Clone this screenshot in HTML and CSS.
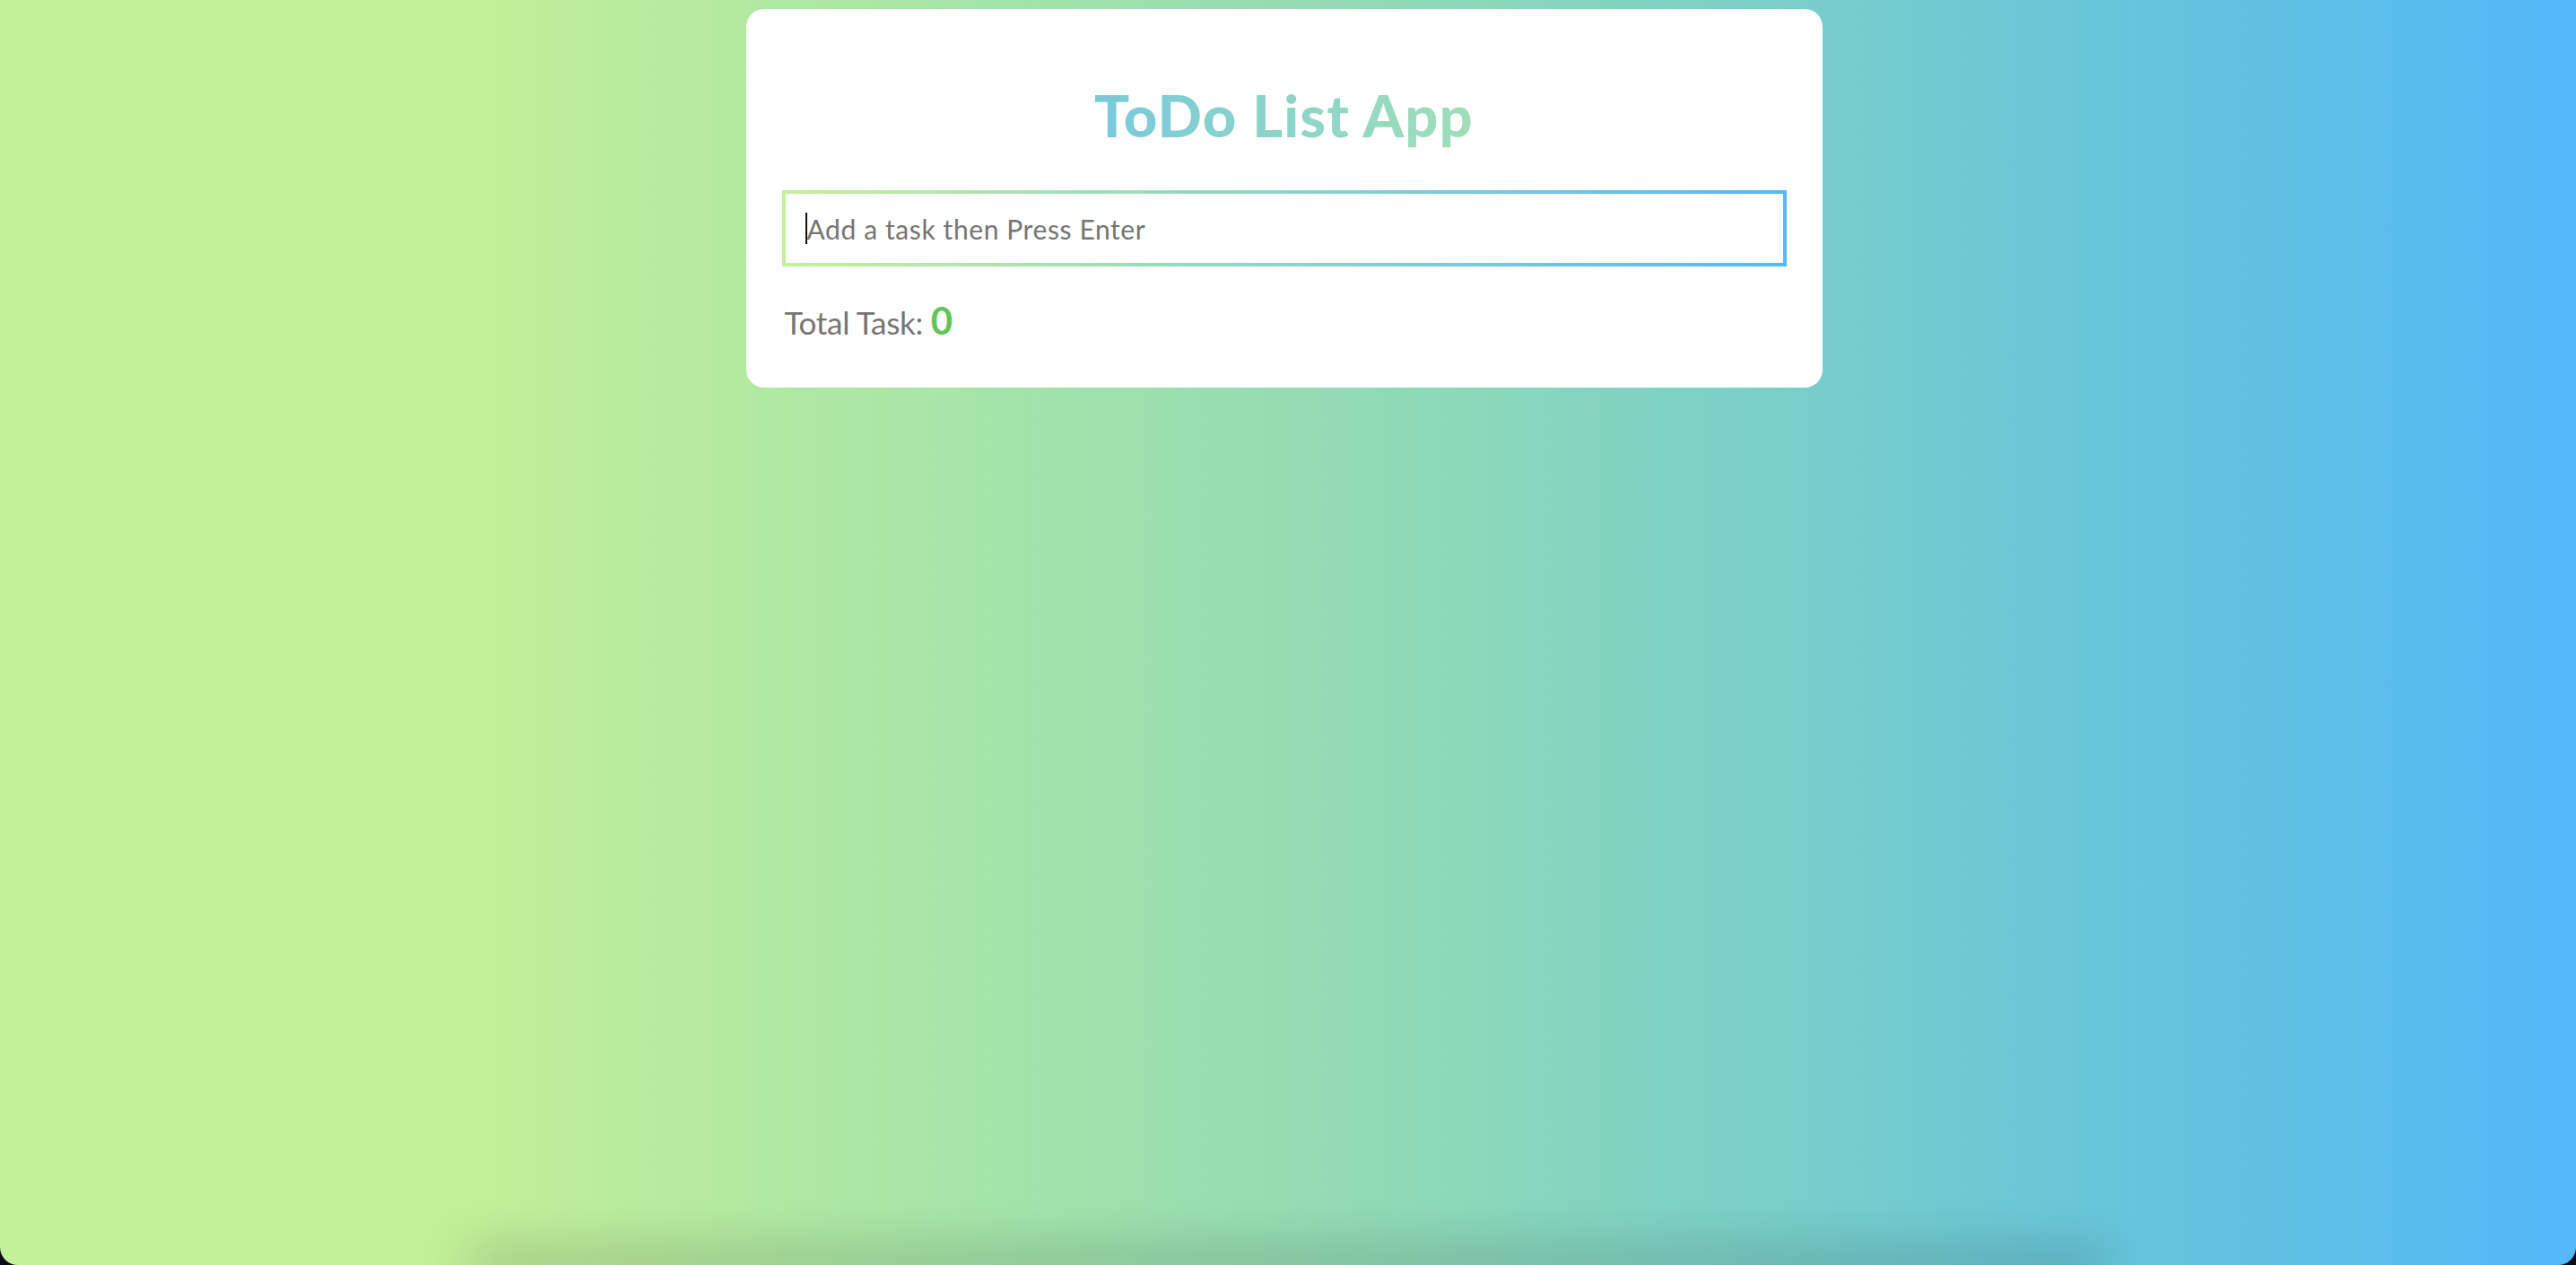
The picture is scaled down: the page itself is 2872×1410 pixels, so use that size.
FILE: index.html
```html
<!DOCTYPE html>
<html lang="en">
<head>
<meta charset="utf-8">
<title>ToDo List App</title>
<link rel="stylesheet" href="styles.css">
</head>
<body>
  <div class="page">
    <main class="card">
      <h1 class="title">ToDo List App</h1>
      <input class="task-input" type="text" placeholder="Add a task then Press Enter" autofocus>
      <p class="total">Total Task: <span class="count">0</span></p>
    </main>
  </div>
  <div class="below-shadow"></div>
</body>
</html>
```

FILE: styles.css
```css
html {
  background: #0b0d18;
  height: 100%;
}

body {
  margin: 0;
  min-height: 1410px;
  display: flex;
  flex-direction: column;
  overflow: hidden;
  border-radius: 0 0 20px 20px;
  background: linear-gradient(to right, #c3f09a 0%, #c2ef99 19%, #a5e4a9 38%, #8ed9b7 55%, #72cbcf 74%, #5fc0e2 88%, #55b8fa 100%);
  font-family: Lato, "Open Sans", Arial, sans-serif;
}

.page {
  display: flex;
  justify-content: center;
  padding: 10px 9px 0 0;
}

.card {
  width: 1200px;
  box-sizing: border-box;
  background: #ffffff;
  border-radius: 20px;
  padding: 79px 40px 48px;
  display: flex;
  flex-direction: column;
}

.title {
  margin: 0;
  font-size: 65px;
  line-height: 78px;
  font-weight: 900;
  letter-spacing: 1.2px;
  text-align: center;
  background: linear-gradient(to right, #56b8f9, #c3f09a);
  -webkit-background-clip: text;
  background-clip: text;
  color: transparent;
}

.task-input {
  margin: 45px 0 0;
  height: 85px;
  box-sizing: border-box;
  width: 100%;
  border: 4px solid;
  border-image: linear-gradient(to right, #c3f09a, #56b8f9) 1;
  padding: 0 22px 0 24px;
  font-family: Lato, "Open Sans", Arial, sans-serif;
  font-size: 30px;
  letter-spacing: 0.6px;
  color: #333333;
  outline: none;
  background: linear-gradient(#111111, #111111) no-repeat 22px 21px / 2px 35px, #ffffff;
  caret-color: #000000;
}

.task-input::placeholder {
  color: #757575;
  opacity: 1;
}

.total {
  margin: 37px 0 0;
  padding-left: 3px;
  font-size: 35px;
  line-height: 50px;
  letter-spacing: -0.3px;
  color: #757575;
}

.count {
  font-size: 42px;
  line-height: 1;
  font-weight: 700;
  letter-spacing: 0;
  color: #63c556;
}

.below-shadow {
  margin-top: auto;
  align-self: center;
  width: 1800px;
  height: 0;
  box-shadow: 0 0 55px 12px rgba(0, 0, 0, 0.28);
}
```
